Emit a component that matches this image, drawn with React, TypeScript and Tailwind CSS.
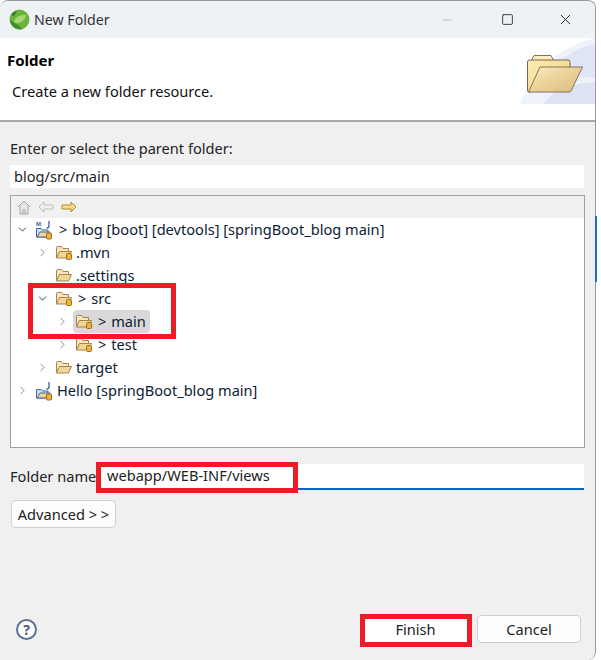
import { ChevronDown, ChevronRight, Minus, Square, X } from "lucide-react"

const FONT = "font-['Noto_Sans','Open_Sans',sans-serif]"

function SpringLogo() {
  return (
    <svg width="21" height="21" viewBox="0 0 21 21">
      <circle cx="10.5" cy="10.5" r="10" fill="#6db33f" />
      <path d="M1 11 A10 10 0 0 0 14 20 L8 15 Z" fill="#3f8f2f" />
      <path d="M5 13 C6 7 12 6 17 6 C16 12 11 15 6 14 Z" fill="#a5d66f" />
      <path d="M2 6 L5 3 L8 2 L5 7 Z" fill="#2f7a2a" />
    </svg>
  )
}

function BigFolder() {
  return (
    <svg width="56" height="38" viewBox="0 0 56 38">
      <defs>
        <linearGradient id="back" x1="0" y1="0" x2="1" y2="1">
          <stop offset="0" stopColor="#fbeeb0" />
          <stop offset="1" stopColor="#eccf7e" />
        </linearGradient>
        <linearGradient id="front" x1="0" y1="0" x2="1" y2="1">
          <stop offset="0" stopColor="#fdf3d3" />
          <stop offset="0.35" stopColor="#efd9a0" />
          <stop offset="1" stopColor="#d9bb7c" />
        </linearGradient>
      </defs>
      <path d="M4 6 L7 0.5 L24 0.5 L27 6 Z" fill="#fbf0bb" stroke="#8a6f5a" />
      <path d="M0.5 7 Q0.5 5 2.5 5 L41 5 Q43 5 43 7 L43 13 L4 37 L2 37 Q0.5 37 0.5 35 Z" fill="url(#back)" stroke="#7d6250" />
      <path d="M13 12 L55.5 12 L44 36 Q43.500 37 42 37 L1.500 37 Z" fill="url(#front)" stroke="#8a6f5a" />
    </svg>
  )
}

function SmallFolder({ pkg = false }: { pkg?: boolean }) {
  return (
    <svg width="18" height="15" viewBox="0 0 18 15" className="shrink-0">
      <path d="M1.500 13 L1.500 2.500 Q1.500 1.500 2.500 1.500 L6.500 1.500 L8 3.500 L13.500 3.500 L13.500 6" fill="#f7e6bd" stroke="#a9834c" />
      <path d="M1.500 13 L4.500 6.500 L16.500 6.500 L13.500 13 Z" fill="#f2d598" stroke="#a9834c" />
      {pkg && <rect x="11.500" y="8.500" width="5" height="6" rx="1" fill="#f2b33d" stroke="#9c6b1c" />}
    </svg>
  )
}

function ProjectIcon({ maven = false }: { maven?: boolean }) {
  return (
    <svg width="19" height="20" viewBox="0 0 19 20" className="shrink-0">
      {maven && (
        <text x="1" y="6" fontSize="6" fontWeight="700" fill="#3a5fa8" fontFamily="Liberation Sans">
          M
        </text>
      )}
      <path d="M14 1 L14 6 Q14 8 11.500 8" fill="none" stroke="#3a5fa8" strokeWidth="1.300" />
      <path d="M1.500 17 L1.500 8.500 L6 8.500 L7.500 10 L13 10 L13 17 Z" fill="#cfdff3" stroke="#47639c" />
      <path d="M2 17 L5 12 L15 12 L13 17 Z" fill="#f0d698" stroke="#47639c" />
      <rect x="11.500" y="13" width="5" height="6" rx="1" fill="#f2b33d" stroke="#9c6b1c" />
    </svg>
  )
}

function TreeRow({
  indent,
  chevron,
  icon,
  label,
  selected,
}: {
  indent: string
  chevron?: "open" | "closed"
  icon: React.ReactNode
  label: string
  selected?: boolean
}) {
  return (
    <div className={`flex h-[23px] items-center ${indent}`}>
      <div className="flex w-[17px] shrink-0 justify-center">
        {chevron === "open" && <ChevronDown size={13} strokeWidth={1.800} className="text-[#3c3c3c]" />}
        {chevron === "closed" && <ChevronRight size={13} strokeWidth={1.800} className="text-[#8d8d8d]" />}
      </div>
      <div className={`ml-[2px] flex h-[23px] items-center gap-[3px] rounded-sm pr-1 pl-[2px] ${selected ? "bg-[#d9d9d9]" : ""}`}>
        {icon}
        <span className={`whitespace-pre text-[14.6px] text-[#0c1c33] ${label.startsWith(">") ? "ml-[2px]" : ""}`}>{label}</span>
      </div>
    </div>
  )
}

export default function App() {
  return (
    <div className={`relative h-[660px] w-[601px] overflow-hidden bg-white ${FONT}`}>
      <div className="flex h-[660px] w-[596px] flex-col overflow-hidden rounded-t-[8px] rounded-br-[8px] border-t border-r border-[#9a9a9a] bg-[#f0f0f0]">
        {/* Title bar */}
        <div className="flex h-[37px] items-center bg-[#eef2f6] pl-[9px]">
          <SpringLogo />
          <span className="ml-[4px] text-[14.2px] text-[#333]">New Folder</span>
          <div className="ml-auto flex items-center">
            <Minus size={14} className="mr-[47px] text-[#b9bdc2]" />
            <Square size={13} strokeWidth={1.500} className="mr-[43px] text-[#1c1c1c]" />
            <X size={17} strokeWidth={1.300} className="mr-[21px] text-[#1c1c1c]" />
          </div>
        </div>

        {/* Wizard header */}
        <div className="relative h-[84px] border-b-2 border-[#a8a8a8] bg-white">
          <div className="pt-[11px] pl-[7px] text-[15px] font-bold leading-[22px] text-black">Folder</div>
          <div className="pt-[9px] pl-[12px] text-[14.6px] leading-[22px] text-[#111]">Create a new folder resource.</div>
          <div className="absolute top-0 right-0">
            <svg width="75" height="66" viewBox="0 0 75 66">
              <path d="M0 66 C14 30 42 8 75 0 L75 66 Z" fill="#eef2fa" />
              <path d="M24 66 C34 50 52 46 75 44 L75 66 Z" fill="#dbe3f5" />
              <path d="M30 34 C42 18 58 10 75 6 L75 40 C60 38 44 38 30 34 Z" fill="#dde5f6" />
            </svg>
          </div>
          <div className="absolute top-[17px] right-[12px]">
            <BigFolder />
          </div>
        </div>

        {/* Body */}
        <div className="flex flex-1 flex-col pr-[10px] pl-[10px]">
          <div className="mt-[16px] text-[14.6px] leading-[20px] text-[#222]">Enter or select the parent folder:</div>
          <div className="mt-[7px] mr-[1px] flex h-[23px] items-center bg-white pl-[4px] text-[14.6px] text-[#222]">blog/src/main</div>

          {/* Tree */}
          <div className="mt-[7px] h-[253px] border border-[#a0a0a0] bg-white">
            <div className="flex h-[22px] items-center gap-[7px] bg-[#f0f0f0] pl-[6px]">
              <svg width="14" height="15" viewBox="0 0 14 15">
                <path d="M1 7 L7 1 L13 7 M3 6 L3 14 L11 14 L11 6 M6 14 L6 10 L8 10 L8 14" fill="#e6e6e6" stroke="#a8a8a8" />
              </svg>
              <svg width="16" height="12" viewBox="0 0 16 12">
                <path d="M1 6 L6 1 L6 4 L15 4 L15 8 L6 8 L6 11 Z" fill="#f0f0f0" stroke="#bdbdbd" />
              </svg>
              <svg width="16" height="12" viewBox="0 0 16 12">
                <path d="M15 6 L10 1 L10 4 L1 4 L1 8 L10 8 L10 11 Z" fill="#fbd98a" stroke="#b58a25" />
              </svg>
            </div>
            <div>
              <TreeRow indent="pl-[3px]" chevron="open" icon={<ProjectIcon maven />} label={">\u2009\u2009blog [boot] [devtools] [springBoot_blog main]"} />
              <TreeRow indent="pl-[23px]" chevron="closed" icon={<SmallFolder pkg />} label=".mvn" />
              <TreeRow indent="pl-[23px]" icon={<SmallFolder />} label=".settings" />
              <TreeRow indent="pl-[23px]" chevron="open" icon={<SmallFolder pkg />} label={">\u2009\u2009src"} />
              <TreeRow indent="pl-[43px]" chevron="closed" icon={<SmallFolder pkg />} label={">\u2009\u2009main"} selected />
              <TreeRow indent="pl-[43px]" chevron="closed" icon={<SmallFolder pkg />} label={">\u2009\u2009test"} />
              <TreeRow indent="pl-[23px]" chevron="closed" icon={<SmallFolder />} label="target" />
              <TreeRow indent="pl-[3px]" chevron="closed" icon={<ProjectIcon />} label="Hello [springBoot_blog main]" />
            </div>
          </div>

          {/* Folder name */}
          <div className="mt-[16px] mr-[1px] flex h-[26px] items-center">
            <span className="w-[87px] shrink-0 text-[14.6px] text-[#222]">Folder name</span>
            <div className="flex h-[26px] flex-1 items-center border-b-2 border-[#0067c0] bg-white pl-[10px] text-[14.6px] text-[#222]">
              webapp/WEB-INF/views
            </div>
          </div>

          <button className="mt-[10px] ml-[1px] h-[28px] w-[105px] rounded-[4px] border border-[#d0d0d0] bg-[#fdfdfd] pt-[1px] text-[14.6px] text-[#222]">
            Advanced &gt; &gt;
          </button>

          {/* Footer */}
          <div className="mt-auto mb-[17px] flex items-center pr-[4px]">
            <div className="ml-[6px] flex h-[21px] w-[21px] items-center justify-center rounded-full border-2 border-[#5c7296] bg-white text-[14px] font-bold text-[#47597c]">
              ?
            </div>
            <button className="ml-auto h-[27px] w-[103px] rounded-[4px] bg-white pt-[1px] text-[14.6px] text-[#222]">Finish</button>
            <button className="ml-[10px] h-[28px] w-[104px] rounded-[4px] border border-[#d0d0d0] bg-[#fdfdfd] pt-[1px] text-[14.6px] text-[#222]">
              Cancel
            </button>
          </div>
        </div>
      </div>

      {/* Red annotation boxes */}
      <div className="absolute top-[283px] left-[28px] h-[56px] w-[148px] border-[5px] border-[#ed1c24]" />
      <div className="absolute top-[462px] left-[96px] h-[31px] w-[202px] border-[5px] border-[#ed1c24]" />
      <div className="absolute top-[614px] left-[360px] h-[33px] w-[112px] border-[5px] border-[#ed1c24]" />

      {/* Sliver of the window behind */}
      <div className="absolute top-[216px] left-[595px] h-[66px] w-[2px] bg-[#1b6fb5]" />
    </div>
  )
}
